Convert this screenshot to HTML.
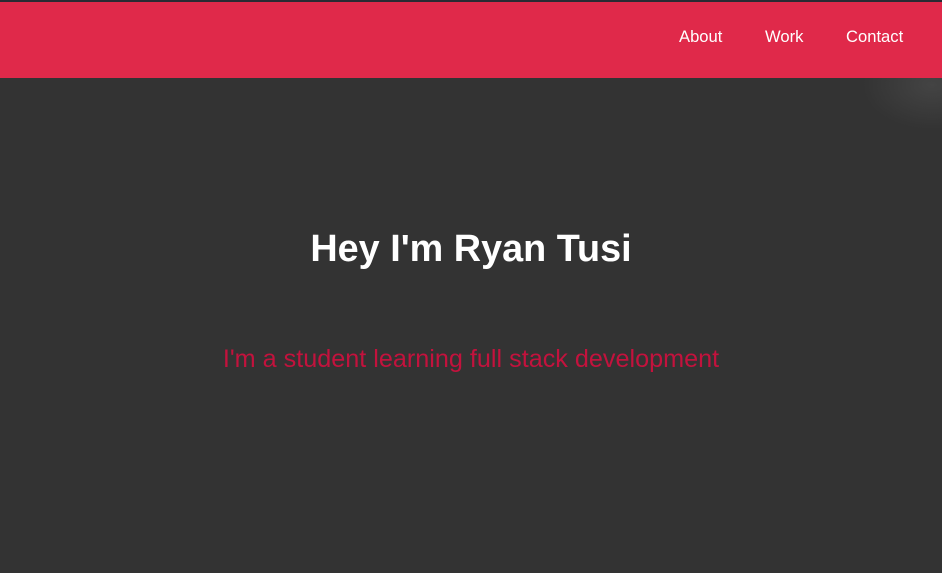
<!DOCTYPE html>
<html><head><style>
html,body{margin:0;padding:0;width:942px;height:573px;overflow:hidden;background:#333;font-family:"Liberation Sans",Arial,sans-serif;}
.top{position:absolute;left:0;top:0;width:942px;height:2px;background:#2a2a33;}
nav{position:absolute;left:0;top:2px;width:942px;height:76px;background:#e0294a;}
nav a{position:absolute;top:25px;color:#fff;font-size:16.6px;text-decoration:none;}
.glow{position:absolute;right:-60px;top:40px;width:140px;height:90px;background:radial-gradient(ellipse at center,rgba(75,75,75,0.7),rgba(51,51,51,0) 70%);}
h1{position:absolute;left:0;width:942px;top:228px;margin:0;text-align:center;color:#fff;font-size:37.8px;font-weight:bold;}
p{position:absolute;left:0;width:942px;top:345px;margin:0;text-align:center;color:#c3123d;font-size:25.2px;}
</style></head><body>
<div class="glow"></div>
<div class="top"></div>
<nav><a style="left:679px">About</a><a style="left:765px">Work</a><a style="left:846px">Contact</a></nav>
<h1>Hey I'm Ryan Tusi</h1>
<p>I'm a student learning full stack development</p>
</body></html>
